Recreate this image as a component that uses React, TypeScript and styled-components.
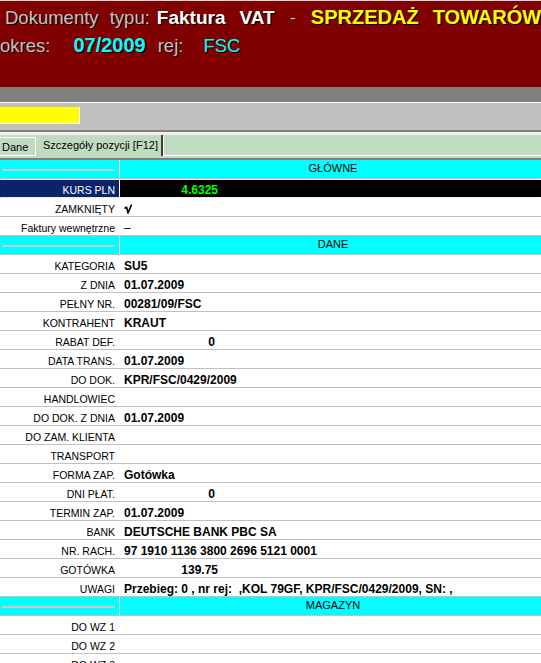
import styled, { createGlobalStyle } from "styled-components";

const Global = createGlobalStyle`
  html, body { margin: 0; padding: 0; background: #fff; overflow: hidden; }
  body { font-family: "Liberation Sans", Arial, sans-serif; }
`;

const Okno = styled.div`
  width: 546px;
  height: 663px;
  overflow: hidden;
  border-top: 1px solid #e0e0e0;
`;

const Naglowek = styled.header`
  height: 86px;
  background: #800000;
  padding-top: 2px;
  box-sizing: border-box;
  white-space: nowrap;
`;

const Linia = styled.div`
  display: flex;
  align-items: baseline;
  height: 28px;
  line-height: 28px;
  text-shadow: 1px 1px 0 #000;
`;

const Slowo = styled.span<{ $kolor: string; $gruby?: boolean; $odstep?: number; $rozmiar?: number }>`
  color: ${(p) => p.$kolor};
  font-weight: ${(p) => (p.$gruby ? 700 : 400)};
  font-size: ${(p) => p.$rozmiar ?? 18.5}px;
  margin-left: ${(p) => p.$odstep ?? 0}px;
  word-spacing: 6px;
`;

const PasekSzary = styled.div`
  height: 15px;
  background: #808080;
  border-bottom: 1px solid #fff;
`;

const Narzedzia = styled.div`
  display: flex;
  align-items: flex-start;
  height: 23px;
  padding-top: 4px;
  background: #c0c0c0;
  border-bottom: 2px solid #808080;
`;

const PoleZolte = styled.div`
  width: 79px;
  height: 16px;
  background: #ffff00;
  border-right: 1px solid #fff;
  border-bottom: 1px solid #fff;
`;

const Zakladki = styled.div`
  display: flex;
  align-items: flex-end;
  height: 21px;
  background: #c0dcc0;
  border-top: 3px solid #f0f0f0;
  font-size: 11px;
  color: #000;
`;

const Zakladka = styled.div<{ $aktywna?: boolean }>`
  box-sizing: border-box;
  display: flex;
  align-items: center;
  height: ${(p) => (p.$aktywna ? 21 : 19)}px;
  width: ${(p) => (p.$aktywna ? 127 : 36)}px;
  padding-left: ${(p) => (p.$aktywna ? 7 : 2)}px;
  padding-bottom: ${(p) => (p.$aktywna ? 2 : 0)}px;
  border-top: ${(p) => (p.$aktywna ? "none" : "1px solid #fff")};
  border-right: ${(p) => (p.$aktywna ? "2px solid #404040" : "1px solid #fff")};
  border-bottom: ${(p) => (p.$aktywna ? "none" : "1px solid #fff")};
`;

const ResztaZakladek = styled.div`
  flex: 1;
  height: 19px;
  border-left: 1px solid #fff;
  border-bottom: 1px solid #fff;
`;

const KrawedzPanelu = styled.div`
  height: 2px;
  background: #c0dcc0;
  border-bottom: 2px solid #808080;
`;

const Wiersz = styled.div<{ $sekcja?: boolean; $aktywny?: boolean }>`
  display: grid;
  grid-template-columns: 119px 1fr;
  height: 19px;
  box-sizing: border-box;
  background: ${(p) => (p.$sekcja ? "#00ffff" : "#fff")};
  border-top: ${(p) => (p.$aktywny ? "1px dotted #d8d8d8" : "none")};
  border-bottom: 1px ${(p) => (p.$aktywny ? "dotted #d8d8d8" : "solid #c0c0c0")};
`;

const Etykieta = styled.div<{ $aktywna?: boolean }>`
  display: flex;
  align-items: center;
  justify-content: flex-end;
  padding: 3px 4px 0 0;
  font-size: 10.5px;
  color: ${(p) => (p.$aktywna ? "#fff" : "#000")};
  background: ${(p) => (p.$aktywna ? "#0a246a" : "transparent")};
  white-space: nowrap;
  overflow: hidden;
`;

const Kreska = styled.div`
  align-self: start;
  margin: 9px 4px 0 2px;
  height: 2px;
  background: #c8c8c8;
`;

const Wartosc = styled.div<{ $aktywna?: boolean }>`
  display: flex;
  align-items: center;
  padding: 3px 0 0 4px;
  border-left: 1px solid #fff;
  font-size: 12px;
  font-weight: 700;
  color: ${(p) => (p.$aktywna ? "#00ff00" : "#000")};
  background: ${(p) => (p.$aktywna ? "#000" : "transparent")};
  white-space: pre;
  overflow: hidden;
`;

const TytulSekcji = styled.div`
  display: flex;
  align-items: center;
  justify-content: center;
  padding-bottom: 3px;
  border-left: 1px solid #fff;
  font-size: 11px;
  color: #000;
`;

const Liczba = styled.span<{ $szer: number }>`
  display: inline-block;
  width: ${(p) => p.$szer}px;
  text-align: right;
`;

const Myslnik = styled.span`
  font-weight: 400;
  font-size: 12px;
`;

type Pozycja =
  | { sekcja: string }
  | { etykieta: string; wartosc?: string; liczba?: number; aktywna?: boolean; znak?: "ptaszek" | "myslnik" };

const pozycje: Pozycja[] = [
  { sekcja: "GŁÓWNE" },
  { etykieta: "KURS PLN", wartosc: "4.6325", liczba: 94, aktywna: true },
  { etykieta: "ZAMKNIĘTY", znak: "ptaszek" },
  { etykieta: "Faktury wewnętrzne", znak: "myslnik" },
  { sekcja: "DANE" },
  { etykieta: "KATEGORIA", wartosc: "SU5" },
  { etykieta: "Z DNIA", wartosc: "01.07.2009" },
  { etykieta: "PEŁNY NR.", wartosc: "00281/09/FSC" },
  { etykieta: "KONTRAHENT", wartosc: "KRAUT" },
  { etykieta: "RABAT DEF.", wartosc: "0", liczba: 91 },
  { etykieta: "DATA TRANS.", wartosc: "01.07.2009" },
  { etykieta: "DO DOK.", wartosc: "KPR/FSC/0429/2009" },
  { etykieta: "HANDLOWIEC" },
  { etykieta: "DO DOK. Z DNIA", wartosc: "01.07.2009" },
  { etykieta: "DO ZAM. KLIENTA" },
  { etykieta: "TRANSPORT" },
  { etykieta: "FORMA ZAP.", wartosc: "Gotówka" },
  { etykieta: "DNI PŁAT.", wartosc: "0", liczba: 91 },
  { etykieta: "TERMIN ZAP.", wartosc: "01.07.2009" },
  { etykieta: "BANK", wartosc: "DEUTSCHE BANK PBC SA" },
  { etykieta: "NR. RACH.", wartosc: "97 1910 1136 3800 2696 5121 0001" },
  { etykieta: "GOTÓWKA", wartosc: "139.75", liczba: 94 },
  { etykieta: "UWAGI", wartosc: "Przebieg: 0 , nr rej:  ,KOL 79GF, KPR/FSC/0429/2009, SN: ," },
  { sekcja: "MAGAZYN" },
  { etykieta: "DO WZ 1" },
  { etykieta: "DO WZ 2" },
  { etykieta: "DO WZ 3" },
];

function Ptaszek() {
  return (
    <svg width="9" height="10" viewBox="0 0 9 10">
      <path d="M0.5 4.2 L2.6 3.4 L4 8.8 L7.6 0.6" fill="none" stroke="#000" strokeWidth="1.6" strokeLinejoin="miter" />
    </svg>
  );
}

export default function App() {
  return (
    <Okno>
      <Global />
      <Naglowek>
        <Linia>
          <Slowo $kolor="#c0c0c0" $odstep={5}>Dokumenty typu:</Slowo>
          <Slowo $kolor="#fff" $gruby $rozmiar={19} $odstep={7}>Faktura</Slowo>
          <Slowo $kolor="#fff" $gruby $rozmiar={19} $odstep={14}>VAT</Slowo>
          <Slowo $kolor="#c0c0c0" $odstep={15}>-</Slowo>
          <Slowo $kolor="#ffff00" $gruby $rozmiar={20} $odstep={15}>SPRZEDAŻ</Slowo>
          <Slowo $kolor="#ffff00" $gruby $rozmiar={20} $odstep={14}>TOWARÓW</Slowo>
        </Linia>
        <Linia>
          <Slowo $kolor="#c0c0c0">okres:</Slowo>
          <Slowo $kolor="#00ffff" $gruby $rozmiar={20} $odstep={23}>07/2009</Slowo>
          <Slowo $kolor="#c0c0c0" $odstep={12}>rej:</Slowo>
          <Slowo $kolor="#00ffff" $odstep={20}>FSC</Slowo>
        </Linia>
      </Naglowek>
      <PasekSzary />
      <Narzedzia>
        <PoleZolte />
      </Narzedzia>
      <Zakladki>
        <Zakladka>Dane</Zakladka>
        <Zakladka $aktywna>Szczegóły pozycji [F12]</Zakladka>
        <ResztaZakladek />
      </Zakladki>
      <KrawedzPanelu />
      {pozycje.map((p, i) =>
        "sekcja" in p ? (
          <Wiersz key={i} $sekcja>
            <Kreska />
            <TytulSekcji>{p.sekcja}</TytulSekcji>
          </Wiersz>
        ) : (
          <Wiersz key={i} $aktywny={p.aktywna}>
            <Etykieta $aktywna={p.aktywna}>{p.etykieta}</Etykieta>
            <Wartosc $aktywna={p.aktywna}>
              {p.znak === "ptaszek" && <Ptaszek />}
              {p.znak === "myslnik" && <Myslnik>–</Myslnik>}
              {p.wartosc && (p.liczba ? <Liczba $szer={p.liczba}>{p.wartosc}</Liczba> : p.wartosc)}
            </Wartosc>
          </Wiersz>
        )
      )}
    </Okno>
  );
}
